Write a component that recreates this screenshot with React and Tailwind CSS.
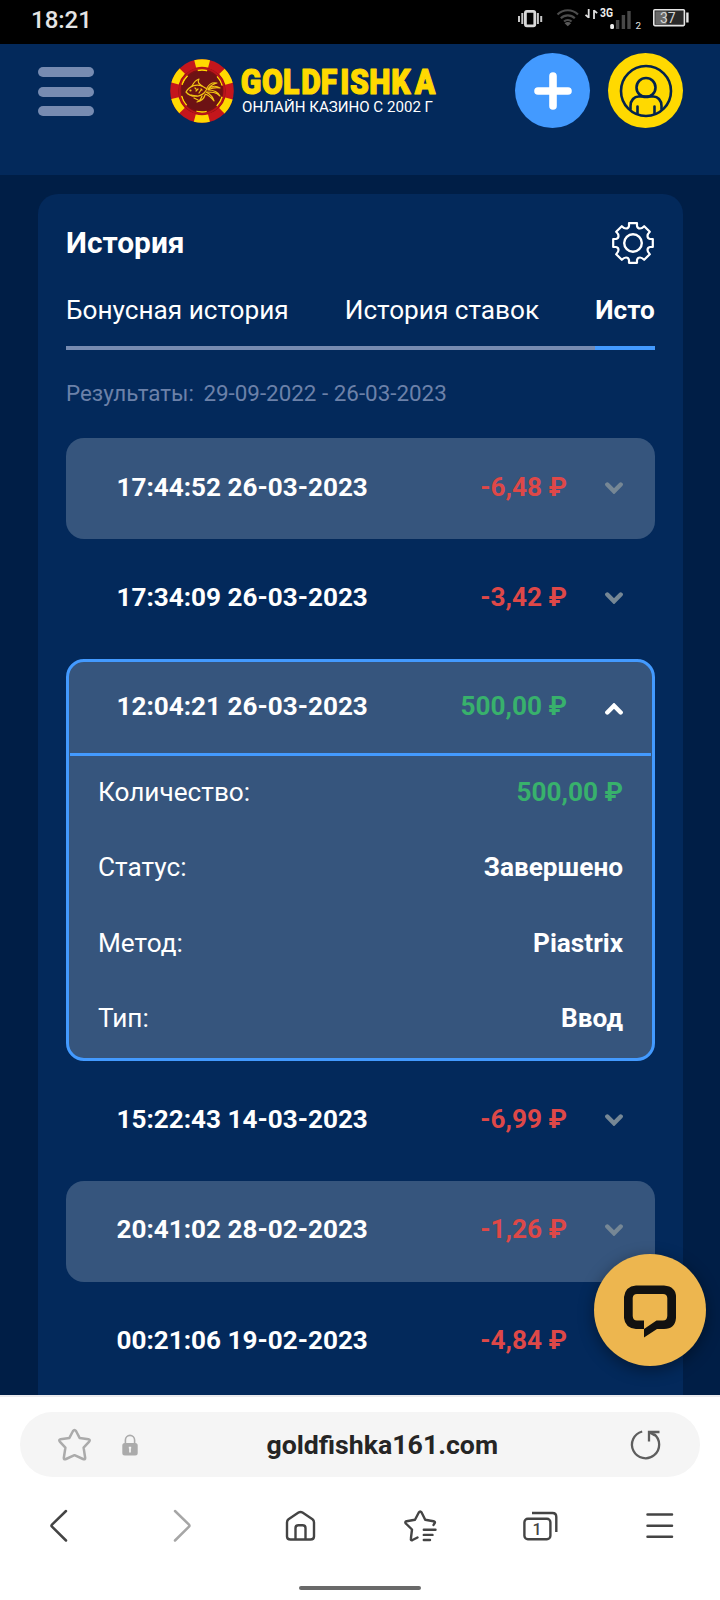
import React, { useState } from 'react';

const operations = [
  { id: 1, date: '17:44:52 26-03-2023', amount: '-6,48 ₽' },
  { id: 2, date: '17:34:09 26-03-2023', amount: '-3,42 ₽' },
  {
    id: 3,
    date: '12:04:21 26-03-2023',
    amount: '500,00 ₽',
    status: 'Завершено',
    method: 'Piastrix',
    type: 'Ввод',
  },
  { id: 4, date: '15:22:43 14-03-2023', amount: '-6,99 ₽' },
  { id: 5, date: '20:41:02 28-02-2023', amount: '-1,26 ₽' },
  { id: 6, date: '00:21:06 19-02-2023', amount: '-4,84 ₽' },
];

const amountColor = (amount) => (amount.startsWith('-') ? 'text-[#de4848]' : 'text-[#38b16c]');

const StatusBar = () => (
  <div className="flex h-11 shrink-0 items-center justify-between bg-black pl-[31px] pr-[30px]">
    <span className="pb-[5px] text-[24px] leading-none font-medium text-[#e4e4e4]">18:21</span>
    <svg width="174" height="44" viewBox="516 0 174 44" fill="none">
      {/* vibration */}
      <rect x="525.4" y="11.4" width="9.4" height="14.4" rx="1.5" stroke="#d8d8d8" strokeWidth="2.8" />
      <path d="M522.3 13v11M519 16v6M537.9 13v11M541.2 16v6" stroke="#c8c8c8" strokeWidth="2" />
      {/* wifi */}
      <path d="M557.5 14.5a14.5 14.5 0 0 1 20.5 0M560.8 18.2a10 10 0 0 1 14 0M564 21.6a5.6 5.6 0 0 1 7.6 0" stroke="#4c4c4c" strokeWidth="2.1" />
      <path d="M564.6 23.2a4.6 4.6 0 0 1 6.4 0l-3.2 3z" fill="#5a5a5a" />
      {/* data arrows */}
      <path d="M588.7 9v9M588.7 17.5l-3.2-2.6M594 19v-9M594 10.500l3.2 2.6" stroke="#e0e0e0" strokeWidth="1.8" />
      <text x="600" y="17.2" fontSize="12.8" fontWeight="700" fill="#eee" fontFamily="Roboto, sans-serif" textLength="13" lengthAdjust="spacingAndGlyphs">3G</text>
      <rect x="610.2" y="24" width="3.8" height="5" rx="1.5" fill="#eee" />
      <path d="M617.6 29v-9M623.4 29V15M629 29V11" stroke="#484848" strokeWidth="3.4" />
      <text x="635.6" y="29" fontSize="9.8" fill="#e5e5e5" fontFamily="Roboto, sans-serif">2</text>
      {/* battery */}
      <rect x="653.8" y="9.8" width="30.6" height="15.8" rx="1" fill="#2a2a2a" stroke="#e5e5e5" strokeWidth="1.6" />
      <rect x="655.4" y="11.4" width="11" height="12.6" fill="#6a6a6a" />
      <rect x="686.2" y="12.5" width="2.4" height="10" fill="#e5e5e5" />
      <text x="667.8" y="23" fontSize="14" textAnchor="middle" fill="#d5d5d5" fontFamily="Roboto, sans-serif">37</text>
    </svg>
  </div>
);

const Chip = () => (
  <svg width="64" height="64" viewBox="-32 -32 64 64" fill="none">
    <circle r="31.8" fill="#c4161c" />
    <circle r="28" stroke="#ffd900" strokeWidth="7.6" strokeDasharray="14.4 14.92" strokeDashoffset="7.2" transform="rotate(-90)" />
    <circle r="23.6" fill="#7a1012" />
    <circle r="22.4" stroke="#b8141a" strokeWidth="2" />
    <circle r="20.9" stroke="#ffd900" strokeWidth="1.5" strokeDasharray="10.5 11.388" strokeDashoffset="5.25" transform="rotate(-90)" />
    <circle r="20" fill="#6d1214" />
    {/* goldfish */}
    <g stroke="#f2c414" strokeWidth="1.2" strokeLinecap="round" strokeLinejoin="round">
      <path d="M-16 1C-12-6-5-7 0-5L5-2 2 2C-2 6-11 7-16 1Z" />
      <path d="M-10-5C-8-9-6-11-3-12C-5-9-3-7 0-5M-11 4l6 1" />
      <path d="M5-3C7-7 10-9 15-8C11-7 8-5 6-2C10-6 15-5 18-3C13-4 10-3 6-1C11-1 16 1 18 5C14 1 10 1 5 1" />
      <path d="M4 1C8 3 11 6 12 10C9 6 6 4 3 3M0 5C-1 8-2 10-5 11C-1 10 2 8 3 4M-8 7l4 2M-6 0l2-2M-3 2l2-3M-7-3l1 1M-1-2l1 1" />
    </g>
    <circle cx="-11.5" cy="-.5" r="1.1" fill="#f2c414" />
  </svg>
);

const Header = () => (
  <header className="flex h-[131px] shrink-0 items-start bg-[#03295b] pl-[38px] pr-[37px] pt-[9px]">
    <button type="button" className="mt-[14px] flex w-14 flex-col gap-[9.5px]">
      <span className="h-[10px] w-full rounded-full bg-[#778bb1]" />
      <span className="h-[10px] w-full rounded-full bg-[#778bb1]" />
      <span className="h-[10px] w-full rounded-full bg-[#778bb1]" />
    </button>
    <div className="mt-[5.5px] ml-[75.5px] flex">
      <Chip />
      <svg className="ml-[6.5px] overflow-visible" width="200" height="64" viewBox="240 58.5 200 64">
        <g transform="translate(240 0) scale(.85 1)">
          <text
            x="1 26 50.5 72 95 118 129.5 152 178 205.5"
            y="94"
            fontSize="35.5"
            fontWeight="900"
            fill="#ffd900"
            stroke="#ffd900"
            strokeWidth="1.2"
            strokeLinejoin="round"
            fontFamily="Roboto, sans-serif"
          >
            GOLDFISHKA
          </text>
        </g>
        <text x="242" y="111.5" fontSize="15" fill="#fff" fontFamily="Roboto, sans-serif" textLength="191" lengthAdjust="spacingAndGlyphs">
          ОНЛАЙН КАЗИНО С 2002 Г
        </text>
      </svg>
    </div>
    <div className="ml-auto flex gap-[18px]">
      <button type="button" className="flex size-[75px] items-center justify-center rounded-full bg-[#439aff]">
        <svg width="38" height="38" viewBox="0 0 38 38" stroke="#fff" strokeWidth="7.6" strokeLinecap="round">
          <path d="M4 19h30M19 4v30" />
        </svg>
      </button>
      <button type="button" className="flex size-[75px] items-center justify-center rounded-full bg-[#ffd900]">
        <svg width="54" height="54" viewBox="0 0 54 54" fill="none" stroke="#03234d" strokeWidth="2.6" strokeLinecap="round">
          <circle cx="27" cy="27" r="25" />
          <circle cx="27" cy="23.5" r="9.5" />
          <path d="M11.500 45v-3c0-6 4-9.500 8-9.500h15c4 0 8 3.500 8 9.500v3M18.500 42.500v7M35.500 42.500v7" />
        </svg>
      </button>
    </div>
  </header>
);

const Gear = () => (
  <svg className="mr-px" width="42" height="42" viewBox="-21 -21 42 42" fill="none" stroke="#fff" strokeWidth="2.2" strokeLinejoin="round">
    <path d="M-4-19.8H4V-17Q4.5-14.5 7-14.5Q9-14.5 11.2-16.8L16.8-11.2Q14.5-9 14.5-7Q14.5-4.5 17-4H19.8V4H17Q14.5 4.5 14.5 7Q14.5 9 16.8 11.2L11.2 16.8Q9 14.5 7 14.5Q4.5 14.5 4 17V19.8H-4V17Q-4.5 14.5-7 14.5Q-9 14.5-11.2 16.8L-16.8 11.2Q-14.5 9-14.5 7Q-14.5 4.5-17 4H-19.8V-4H-17Q-14.5-4.5-14.5-7Q-14.5-9-16.8-11.2L-11.2-16.8Q-9-14.5-7-14.5Q-4.5-14.5-4-17Z" />
    <circle r="8.8" strokeWidth="2.4" />
  </svg>
);

const Chevron = ({ open }) => (
  <svg
    className={open ? 'mt-[5px] rotate-180 text-white' : 'mt-[2px] text-[#768795]'}
    width="18"
    height="12"
    viewBox="0 0 18 12"
    fill="none"
    stroke="currentColor"
    strokeWidth="4.4"
    strokeLinecap="round"
  >
    <path d="M2.3 2.5L9 9.3L15.7 2.5" />
  </svg>
);

const DetailRow = ({ label, value, valueClass = 'text-white' }) => (
  <div className="flex h-[75.4px] items-center justify-between pb-[3px] pl-[29px] pr-[29px]">
    <span>{label}</span>
    <span className={`font-bold ${valueClass}`}>{value}</span>
  </div>
);

const Operation = ({ item, open, shaded, onToggle }) => {
  const summary = (
    <>
      <span className="text-[26.1px] font-bold">{item.date}</span>
      <span className={`ml-auto mr-[38px] font-bold ${amountColor(item.amount)}`}>{item.amount}</span>
      <Chevron open={open} />
    </>
  );

  if (!open) {
    return (
      <div
        onClick={onToggle}
        className={`flex h-[101px] shrink-0 items-center rounded-[18px] pb-[3.5px] pl-[50.5px] pr-8 ${shaded ? 'bg-[#36557d]' : ''}`}
      >
        {summary}
      </div>
    );
  }

  return (
    <div className="h-[402px] shrink-0 rounded-[18px] border-[3px] border-[#439aff] bg-[#36557d]">
      <div onClick={onToggle} className="mx-px flex h-[94px] items-center border-b-[3px] border-[#439aff] pb-[2px] pl-[46.5px] pr-7">
        {summary}
      </div>
      <DetailRow label="Количество:" value={item.amount} valueClass={amountColor(item.amount)} />
      <DetailRow label="Статус:" value={item.status} />
      <DetailRow label="Метод:" value={item.method} />
      <DetailRow label="Тип:" value={item.type} />
    </div>
  );
};

const BrowserBar = () => (
  <footer className="flex h-[205px] shrink-0 flex-col items-center border-t-2 border-[#ebebee] bg-white">
    <div className="mt-[15px] flex h-[65px] w-[680px] items-center rounded-full bg-[#f5f5f5] pl-[36.5px] pr-[39px]">
      <svg width="36" height="36" viewBox="0 0 36 36" fill="none" stroke="#ababab" strokeWidth="2.5" strokeLinejoin="round">
        <path d="M16 4Q17.5 1.8 19 4L22.6 10.9L31.5 12.3Q33.6 12.8 32.2 14.6L26.6 20.6L28.2 31Q28.2 33 26 32L17.5 28.2L9 32Q6.8 33 6.8 31L8.4 20.6L2.8 14.6Q1.4 12.8 3.5 12.3L12.4 10.9Z" />
      </svg>
      <svg className="ml-[29px]" width="16" height="22" viewBox="0 0 16 22">
        <path d="M3.4 10V6a4.6 4.6 0 0 1 9.200 0v4" fill="none" stroke="#ababab" strokeWidth="1.6" />
        <rect x=".3" y="9" width="15.4" height="12.5" rx="2.5" fill="#ababab" />
        <path d="M8 13.5v5M6.8 13.7h2.4" stroke="#f5f5f5" strokeWidth="1.7" />
      </svg>
      <span className="flex-1 pt-[2px] pl-[14px] text-center text-[26.7px] font-bold text-[#252525]">goldfishka161.com</span>
      <svg className="ml-[16px]" width="32" height="32" viewBox="0 0 32 32" fill="none" stroke="#5e5e5e" strokeWidth="2.3">
        <path d="M13.2 2.5A13.6 13.6 0 1 0 25 5" />
        <path d="M20 12.5V3H30.5M20 3L26 6.5" />
      </svg>
    </div>
    <nav className="mt-[25px] grid h-[48px] w-full grid-cols-6 place-items-center">
      <svg width="36" height="36" viewBox="0 0 36 36" fill="none" stroke="#444" strokeWidth="2.5" strokeLinecap="round" strokeLinejoin="round">
        <path d="M24 3L10 16.7Q9 17.7 10 18.7L24 32.5" />
      </svg>
      <svg width="36" height="36" viewBox="0 0 36 36" fill="none" stroke="#a6a6a6" strokeWidth="2.5" strokeLinecap="round" strokeLinejoin="round">
        <path d="M13 3L27 16.7Q28 17.7 27 18.7L13 32.5" />
      </svg>
      <svg width="36" height="36" viewBox="0 0 36 36" fill="none" stroke="#444" strokeWidth="2.4" strokeLinejoin="round">
        <path d="M5 14.5Q5 12.5 6.5 11.3L16.5 4.6Q18.5 3.3 20.5 4.6L30.5 11.3Q32 12.5 32 14.5V28.5Q32 31.5 28.5 31.5H8.5Q5 31.5 5 28.5Z" />
        <path d="M13.5 31.5V20Q13.5 17.2 16.2 17.2H20.8Q23.5 17.2 23.5 20V31.5" />
      </svg>
      <svg width="36" height="36" viewBox="0 0 36 36" fill="none" stroke="#444" strokeWidth="2.4" strokeLinecap="round" strokeLinejoin="round">
        <path d="M15.5 29.5L10.5 32Q8.6 32.7 8.9 30.7L10 21.5L3.8 15.5Q2.5 13.7 4.6 13.2L13 11.8L16.8 4.5Q18.2 2.5 19.6 4.5L23.2 11.8L31.5 13.2Q33.5 13.7 32.7 15L31.5 17" />
        <path d="M21.8 21.7H33.5M21.8 26.9H30.5M21.8 32H28" />
      </svg>
      <svg width="36" height="36" viewBox="0 0 36 36" fill="none" stroke="#444" strokeWidth="2.4">
        <rect x="2.4" y="10.7" width="26" height="20.5" rx="3.5" />
        <path d="M10 5H30.5Q34.3 5 34.3 9V24" />
        <text x="15" y="26.7" fontSize="16" fontWeight="500" textAnchor="middle" fill="#444" stroke="none" fontFamily="Roboto, sans-serif">1</text>
      </svg>
      <svg width="36" height="36" viewBox="0 0 36 36" fill="none" stroke="#444" strokeWidth="2.5" strokeLinecap="round">
        <path d="M5.5 6.5H30M5.5 17.7H30M5.5 28.7H30" />
      </svg>
    </nav>
    <div className="mt-[36px] h-1 w-[122px] rounded-full bg-[#696969]" />
  </footer>
);

const App = () => {
  const [openId, setOpenId] = useState(3);

  return (
    <div className="flex h-[1600px] w-[720px] flex-col overflow-hidden bg-[#001e46] font-[Roboto,sans-serif] text-[26.2px] leading-none text-white">
      <StatusBar />
      <Header />
      <main className="relative h-[1220px] shrink-0 overflow-hidden pt-[19px] pr-[37px] pl-[38px]">
        <section className="h-[1400px] rounded-t-[20px] bg-[#03295b] px-7">
          <div className="flex items-center justify-between pt-[28px]">
            <h1 className="text-[29.9px] leading-none font-bold">История</h1>
            <Gear />
          </div>
          <div className="mt-[24px] flex h-[62px] overflow-hidden whitespace-nowrap">
            <div className="border-b-4 border-[#778bb1] pt-[9px] pr-14">Бонусная история</div>
            <div className="border-b-4 border-[#778bb1] pt-[9px] pr-14">История ставок</div>
            <div className="flex-1 overflow-hidden border-b-4 border-[#439aff] pt-[9px] font-bold">Исто</div>
          </div>
          <p className="mt-[32px] text-[22.4px] leading-[23px] text-[#6c81a9]">
            <span className="mr-[9.5px]">Результаты:</span>
            29-09-2022 - 26-03-2023
          </p>
          <div className="mt-[33px] flex flex-col gap-[9.4px]">
            {operations.map((item, i) => (
              <Operation
                key={item.id}
                item={item}
                open={openId === item.id}
                shaded={i % 2 === 0}
                onToggle={() => setOpenId(openId === item.id ? null : item.id)}
              />
            ))}
          </div>
        </section>
        <button
          type="button"
          className="absolute right-[14px] bottom-[29px] flex size-28 items-center justify-center rounded-full bg-[#edb64f] shadow-[0_4px_16px_rgba(0,0,0,0.4)]"
        >
          <svg className="mt-[2px]" width="54" height="54" viewBox="0 0 54 54" fill="none">
            <path
              fill="#111"
              fillRule="evenodd"
              d="M13 1.5H41Q53 2.5 53 13V34Q52 45 41 45H34L21 53.5V45H13Q2 44 1 34V13Q2 2.5 13 1.5ZM14 10Q10 10 9.7 14V32Q10 36.5 14 36.5H21V45L33.5 36.5H40Q44 36.5 44.3 32V14Q44 10 40 10Z"
            />
          </svg>
        </button>
      </main>
      <BrowserBar />
    </div>
  );
};

export default App;
